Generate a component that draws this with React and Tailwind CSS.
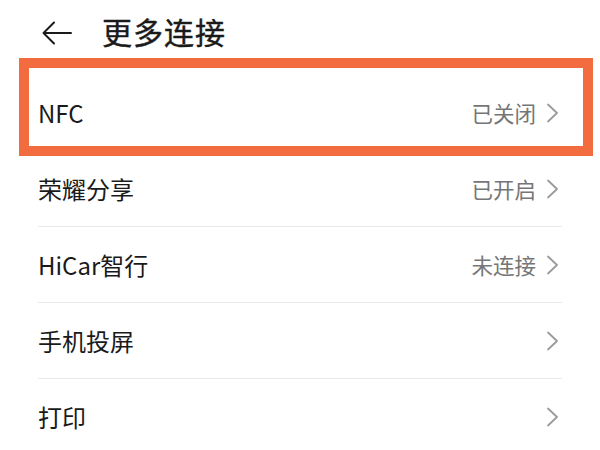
import React from "react";

const rows = [
  { label: "NFC", value: "已关闭" },
  { label: "荣耀分享", value: "已开启" },
  { label: "HiCar智行", value: "未连接" },
  { label: "手机投屏", value: "" },
  { label: "打印", value: "" },
];

function Chevron() {
  return (
    <svg width="13" height="20" viewBox="0 0 13 20" fill="none">
      <path d="M2 1.5 L11 10 L2 18.5" stroke="#9a9a9a" strokeWidth="1.8" strokeLinecap="round" strokeLinejoin="round" />
    </svg>
  );
}

export default function App() {
  return (
    <div
      className="w-[600px] h-[450px] bg-white overflow-hidden text-[#1a1a1a]"
      style={{ fontFamily: '"Noto Sans CJK SC", "Noto Sans", sans-serif' }}
    >
      <div className="h-[75px] pb-[13px] flex items-center pl-[41px]">
        <svg width="32" height="24" viewBox="0 0 32 24" fill="none" className="mt-[4px]">
          <path d="M30 12 H3 M13 1.5 L2.5 12 L13 22.5" stroke="#1a1a1a" strokeWidth="2" strokeLinecap="round" strokeLinejoin="round" />
        </svg>
        <div className="ml-[29px] text-[30px] leading-none font-normal tracking-[1px] [-webkit-text-stroke:0.4px_#1a1a1a]">更多连接</div>
      </div>
      <div>
        {rows.map((r, i) => (
          <div key={r.label} className="relative">
            <div className="h-[75px] mx-[38px] flex items-center justify-between">
              <span className="text-[24px] leading-none">{r.label}</span>
              <div className="flex items-center gap-[10px] pr-[3px]">
                {r.value && <span className="text-[21.5px] leading-none text-[#767676]">{r.value}</span>}
                <Chevron />
              </div>
            </div>
            {i < rows.length - 1 && <div className="mx-[38px] h-[1px] bg-[#e8e8e8]" />}
            {i === 0 && (
              <div className="absolute top-[-17px] bottom-[-5px] left-[19px] right-[7px] border-[10px] border-[#f36c3f] pointer-events-none" />
            )}
          </div>
        ))}
      </div>
    </div>
  );
}
